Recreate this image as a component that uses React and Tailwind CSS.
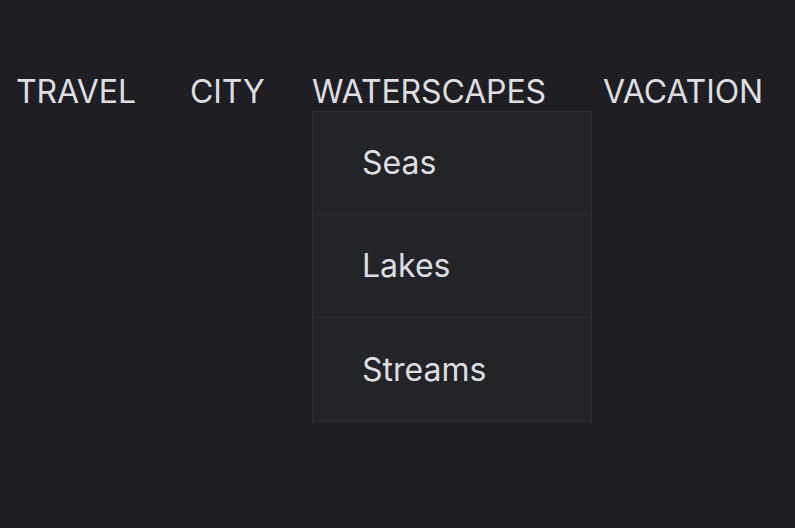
export default function App() {
  const items = [
    { label: 'TRAVEL', w: 'w-[174px]' },
    { label: 'CITY', w: 'w-[122px]' },
    { label: 'WATERSCAPES', w: 'w-[291px]' },
    { label: 'VACATION', w: 'w-auto' },
  ];
  const sub = ['Seas', 'Lakes', 'Streams'];
  return (
    <div className="bg-[#1f1e23] h-[528px] w-full overflow-hidden text-[#dedee0]" style={{ fontFamily: 'Inter, sans-serif' }}>
      <ul className="flex pl-4 pt-[73px]">
        {items.map((it) => (
          <li key={it.label} className={`relative shrink-0 text-[32px] leading-[38px] tracking-[-0.1px] ${it.w}`}>
            {it.label}
            {it.label === 'WATERSCAPES' && (
              <div className="absolute left-0 top-[38px] w-[280px] bg-[#232428] border border-[#2e2f33] tracking-normal">
                {sub.map((s, i) => (
                  <div
                    key={s}
                    className={`h-[103px] flex items-center pl-[49px] text-[32px] ${i < sub.length - 1 ? 'border-b border-[#2e2f33]' : ''}`}
                  >
                    {s}
                  </div>
                ))}
              </div>
            )}
          </li>
        ))}
      </ul>
    </div>
  );
}
